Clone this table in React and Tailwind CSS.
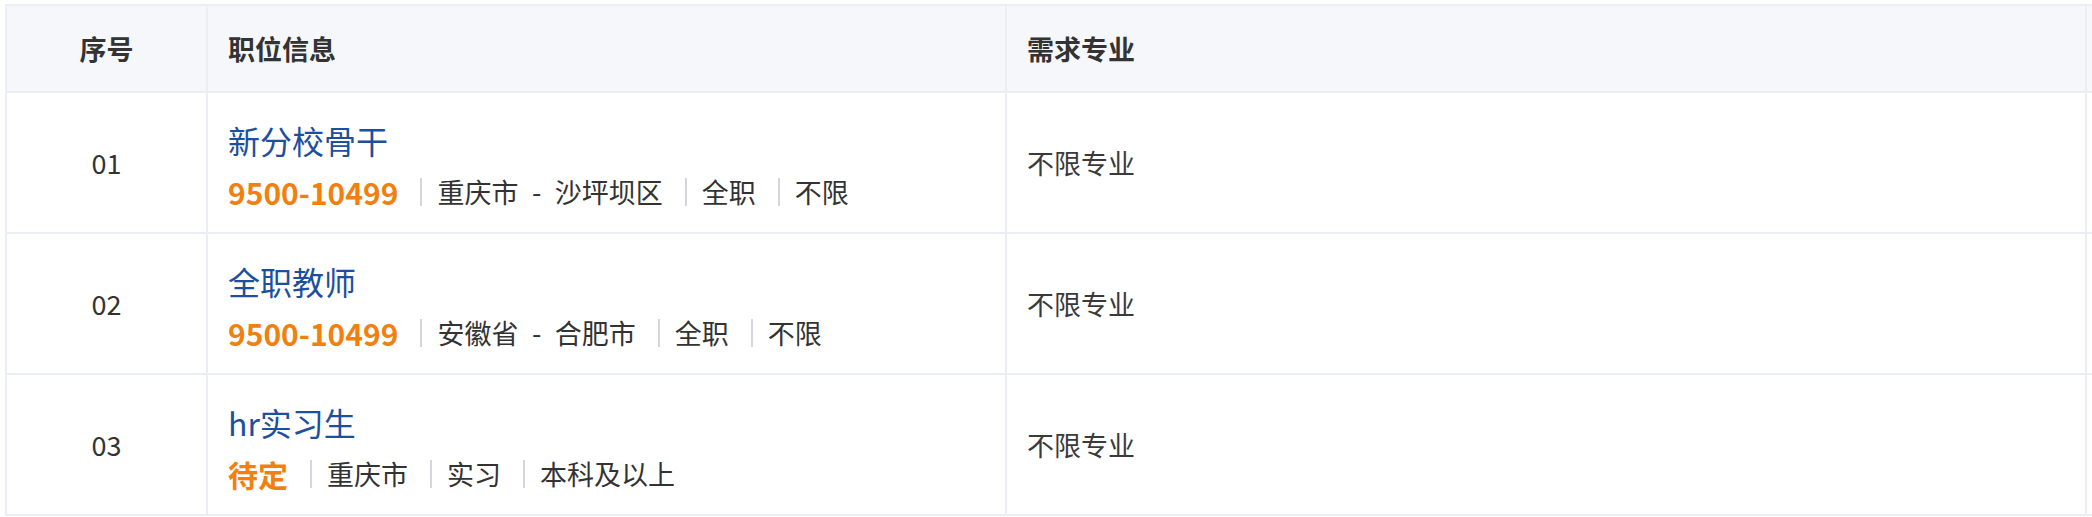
import React from 'react';

const jobs = [
  {
    id: '01',
    title: '新分校骨干',
    salary: '9500-10499',
    tags: ['重庆市\u2002-\u2002沙坪坝区', '全职', '不限'],
    major: '不限专业',
  },
  {
    id: '02',
    title: '全职教师',
    salary: '9500-10499',
    tags: ['安徽省\u2002-\u2002合肥市', '全职', '不限'],
    major: '不限专业',
  },
  {
    id: '03',
    title: 'hr实习生',
    salary: '待定',
    tags: ['重庆市', '实习', '本科及以上'],
    major: '不限专业',
  },
];

const JobTable = () => {
  return (
    <div className="w-[2092px] h-[517px] overflow-hidden bg-white pl-[5px] pt-[4px] font-['Noto_Sans_CJK_SC',sans-serif] text-[#333]">
      <div className="w-[2400px] border-t-2 border-l-2 border-[#ebeef5]">
        {/* header */}
        <div className="flex h-[87px] bg-[#f5f7fa] text-[27px] font-bold leading-[40px]">
          <div className="w-[201px] flex items-center justify-center border-r-2 border-b-2 border-[#ebeef5]">
            序号
          </div>
          <div className="w-[799px] flex items-center pl-[20px] border-r-2 border-b-2 border-[#ebeef5]">
            职位信息
          </div>
          <div className="w-[1080px] flex items-center pl-[20px] border-r-2 border-b-2 border-[#ebeef5]">
            需求专业
          </div>
          <div className="flex-1 border-b-2 border-[#ebeef5]"></div>
        </div>

        {jobs.map((job) => (
          <div key={job.id} className="flex h-[141px]">
            <div className="w-[201px] flex items-center justify-center border-r-2 border-b-2 border-[#ebeef5] text-[27px] leading-[36px]">
              {job.id}
            </div>
            <div className="w-[799px] flex flex-col justify-center pl-[20px] pt-[5px] border-r-2 border-b-2 border-[#ebeef5]">
              <div className="text-[32px] leading-[40px] text-[#1d4f9f]">{job.title}</div>
              <div className="mt-[14px] flex items-center text-[27px] leading-[36px]">
                <span className="font-bold text-[#f2800f] text-[30px]">{job.salary}</span>
                {job.tags.map((tag) => (
                  <React.Fragment key={tag}>
                    <span className="inline-block w-[2px] h-[28px] bg-[#d3d6dc] ml-[22px] mr-[15px]"></span>
                    <span className="whitespace-pre">{tag}</span>
                  </React.Fragment>
                ))}
              </div>
            </div>
            <div className="w-[1080px] flex items-center pl-[20px] border-r-2 border-b-2 border-[#ebeef5] text-[27px] leading-[36px] text-[#3a3a3a]">
              {job.major}
            </div>
            <div className="flex-1 border-b-2 border-[#ebeef5]"></div>
          </div>
        ))}
      </div>
    </div>
  );
};

export default function App() {
  return <JobTable />;
}
